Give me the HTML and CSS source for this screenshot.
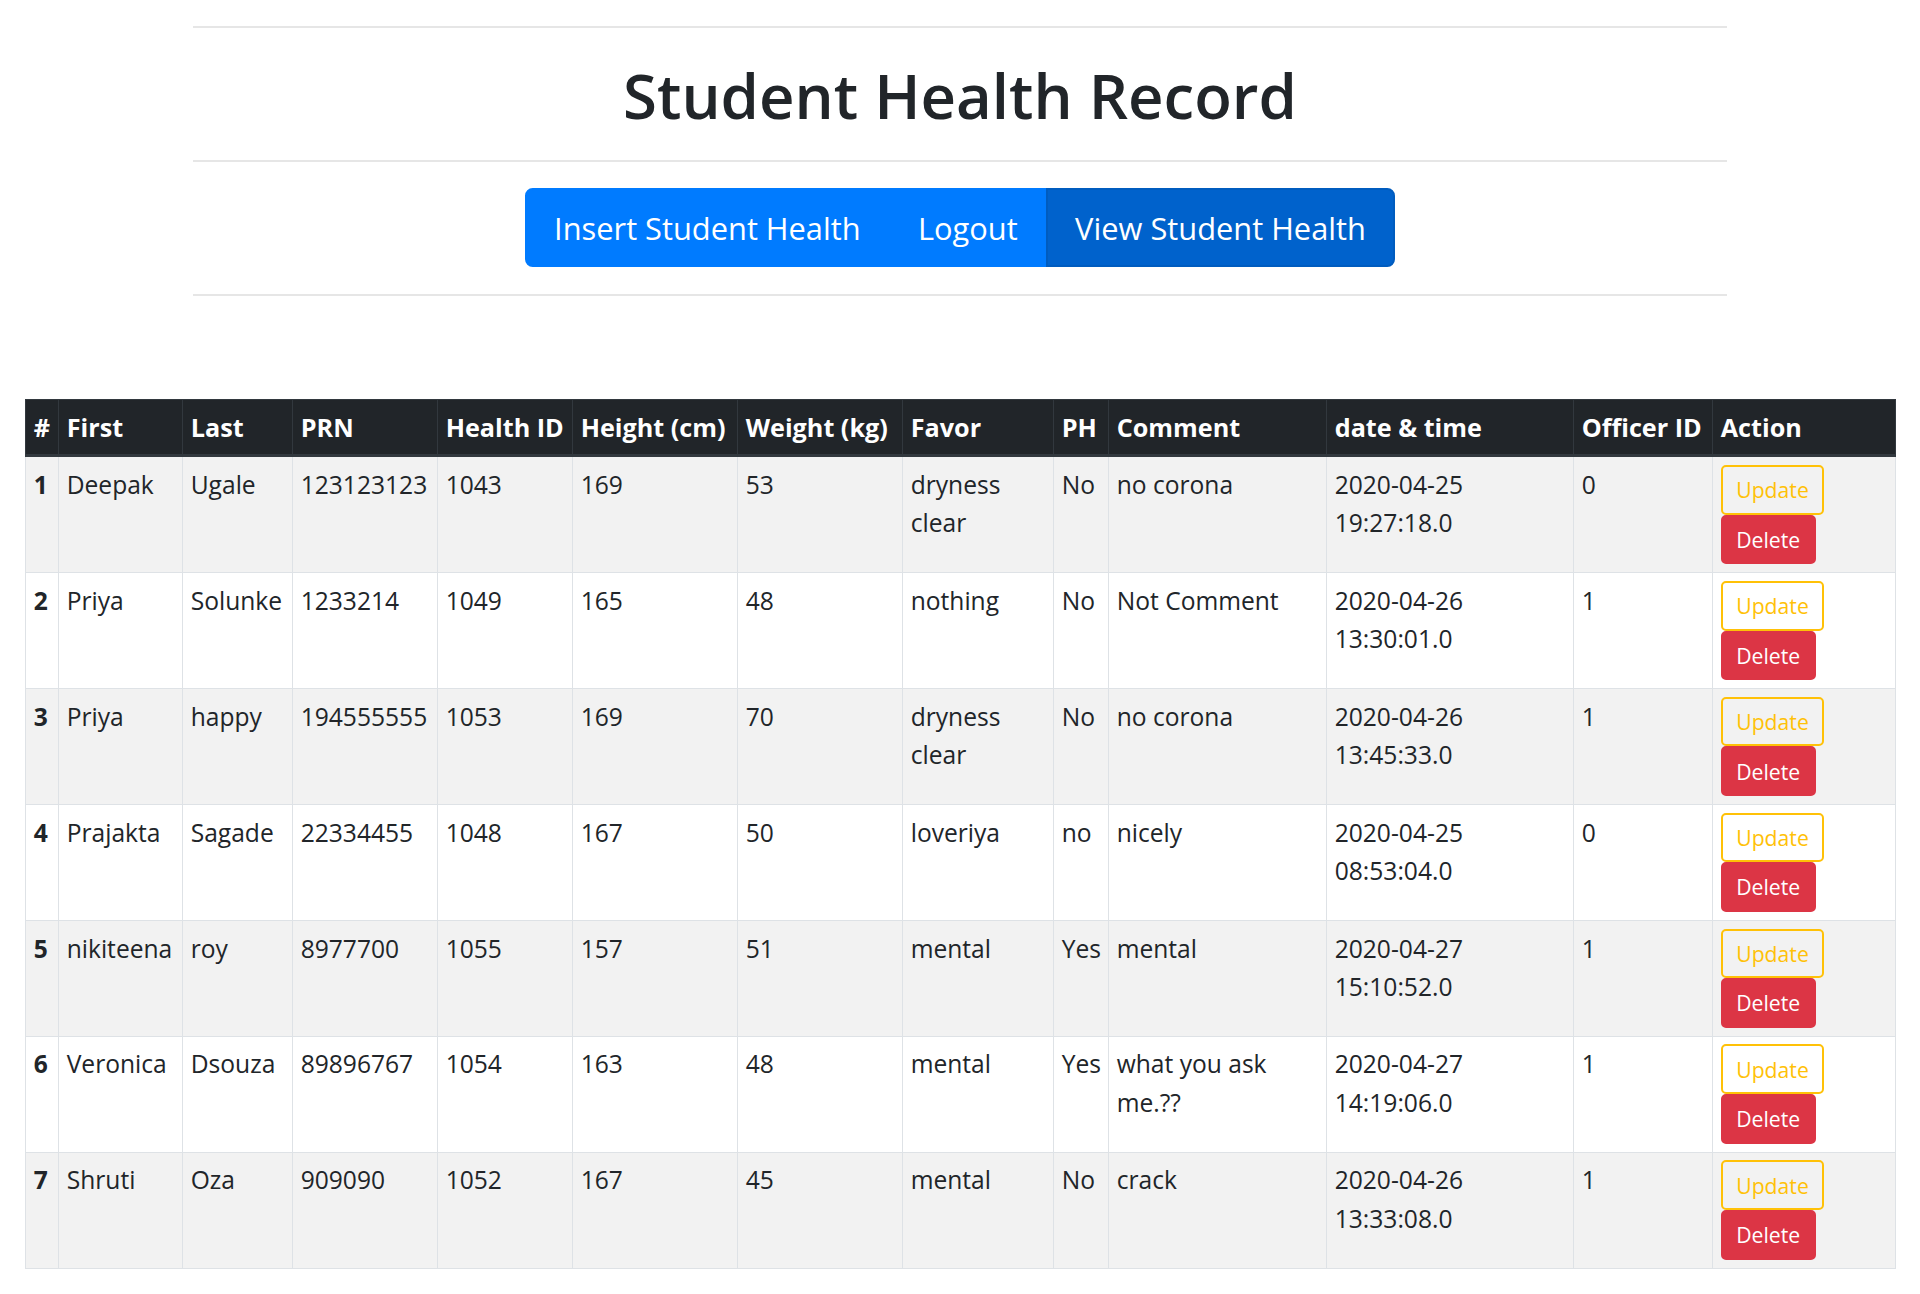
FILE: index.html
```html
<!DOCTYPE html>
<html lang="en">
<head>
<meta charset="utf-8">
<title>Student Health Record</title>
<link rel="stylesheet" href="styles.css">
</head>
<body>
<header class="masthead">
  <hr class="rule">
  <h1 class="title">Student Health Record</h1>
  <hr class="rule">
  <nav class="nav">
    <div class="btn-group">
      <a class="nav-btn" href="#">Insert Student Health</a>
      <a class="nav-btn" href="#">Logout</a>
      <a class="nav-btn active" href="#">View Student Health</a>
    </div>
  </nav>
  <hr class="rule">
</header>

<table class="records">
  <colgroup>
    <col class="c-num"><col class="c-first"><col class="c-last"><col class="c-prn"><col class="c-hid"><col class="c-height"><col class="c-weight"><col class="c-favor"><col class="c-ph"><col class="c-comment"><col class="c-date"><col class="c-officer"><col class="c-action">
  </colgroup>
  <thead>
    <tr>
      <th>#</th><th>First</th><th>Last</th><th>PRN</th><th>Health ID</th><th>Height (cm)</th><th>Weight (kg)</th><th>Favor</th><th>PH</th><th>Comment</th><th>date &amp; time</th><th>Officer ID</th><th>Action</th>
    </tr>
  </thead>
  <tbody>
    <tr>
      <th>1</th><td>Deepak</td><td>Ugale</td><td>123123123</td><td>1043</td><td>169</td><td>53</td><td>dryness clear</td><td>No</td><td>no corona</td><td>2020-04-25 19:27:18.0</td><td>0</td>
      <td class="action-cell"><div class="actions"><button class="btn btn-update">Update</button><button class="btn btn-delete">Delete</button></div></td>
    </tr>
    <tr>
      <th>2</th><td>Priya</td><td>Solunke</td><td>1233214</td><td>1049</td><td>165</td><td>48</td><td>nothing</td><td>No</td><td>Not Comment</td><td>2020-04-26 13:30:01.0</td><td>1</td>
      <td class="action-cell"><div class="actions"><button class="btn btn-update">Update</button><button class="btn btn-delete">Delete</button></div></td>
    </tr>
    <tr>
      <th>3</th><td>Priya</td><td>happy</td><td>194555555</td><td>1053</td><td>169</td><td>70</td><td>dryness clear</td><td>No</td><td>no corona</td><td>2020-04-26 13:45:33.0</td><td>1</td>
      <td class="action-cell"><div class="actions"><button class="btn btn-update">Update</button><button class="btn btn-delete">Delete</button></div></td>
    </tr>
    <tr>
      <th>4</th><td>Prajakta</td><td>Sagade</td><td>22334455</td><td>1048</td><td>167</td><td>50</td><td>loveriya</td><td>no</td><td>nicely</td><td>2020-04-25 08:53:04.0</td><td>0</td>
      <td class="action-cell"><div class="actions"><button class="btn btn-update">Update</button><button class="btn btn-delete">Delete</button></div></td>
    </tr>
    <tr>
      <th>5</th><td>nikiteena</td><td>roy</td><td>8977700</td><td>1055</td><td>157</td><td>51</td><td>mental</td><td>Yes</td><td>mental</td><td>2020-04-27 15:10:52.0</td><td>1</td>
      <td class="action-cell"><div class="actions"><button class="btn btn-update">Update</button><button class="btn btn-delete">Delete</button></div></td>
    </tr>
    <tr>
      <th>6</th><td>Veronica</td><td>Dsouza</td><td>89896767</td><td>1054</td><td>163</td><td>48</td><td>mental</td><td>Yes</td><td>what you ask me.??</td><td>2020-04-27 14:19:06.0</td><td>1</td>
      <td class="action-cell"><div class="actions"><button class="btn btn-update">Update</button><button class="btn btn-delete">Delete</button></div></td>
    </tr>
    <tr>
      <th>7</th><td>Shruti</td><td>Oza</td><td>909090</td><td>1052</td><td>167</td><td>45</td><td>mental</td><td>No</td><td>crack</td><td>2020-04-26 13:33:08.0</td><td>1</td>
      <td class="action-cell"><div class="actions"><button class="btn btn-update">Update</button><button class="btn btn-delete">Delete</button></div></td>
    </tr>
  </tbody>
</table>
</body>
</html>
```

FILE: styles.css
```css
* { box-sizing: border-box; }

body {
  margin: 0;
  background: #fff;
  color: #212529;
  font-family: "Open Sans", "Noto Sans", sans-serif;
  font-size: 24.6px;
  line-height: 38.4px;
}

.masthead {
  margin: 0 193px;
  padding-top: 26px;
}

.rule {
  margin: 0;
  height: 0;
  border: 0;
  border-top: 2px solid #e6e6e6;
}

.title {
  margin: 27px 0 25px;
  font-size: 61.7px;
  line-height: 80px;
  font-weight: 600;
  text-align: center;
}

.nav {
  display: flex;
  justify-content: center;
  margin: 26px 0 27px;
}

.btn-group {
  display: flex;
}

.nav-btn {
  display: block;
  padding: 14px 26.7px 12.7px;
  font-size: 30.8px;
  line-height: 48px;
  color: #fff;
  background: #007bff;
  border: 2px solid #007bff;
  text-decoration: none;
}

.nav-btn:first-child { border-radius: 7.7px 0 0 7.7px; }
.nav-btn:last-child { border-radius: 0 7.7px 7.7px 0; }

.nav-btn.active {
  background: #0062cc;
  border-color: #005cbf;
}

.records {
  width: 1870px;
  margin: 103px 25px 0;
  border-collapse: collapse;
  table-layout: fixed;
}

.c-num { width: 33px; }
.c-first { width: 124px; }
.c-last { width: 110px; }
.c-prn { width: 145px; }
.c-hid { width: 135px; }
.c-height { width: 165px; }
.c-weight { width: 165px; }
.c-favor { width: 151px; }
.c-ph { width: 55px; }
.c-comment { width: 218px; }
.c-date { width: 247px; }
.c-officer { width: 139px; }
.c-action { width: 183px; }

.records th,
.records td {
  padding: 8.7px 7.7px 6.7px;
  border: 1px solid #dee2e6;
  text-align: left;
  vertical-align: top;
}

.records th { font-weight: 700; }

.records thead th {
  padding: 8px 7.7px;
  font-size: 25.2px;
  color: #fff;
  background: #212529;
  border-color: #32383e;
  border-bottom: 3px solid #32383e;
  white-space: nowrap;
}

.records tbody tr:nth-child(odd) {
  background: #f2f2f2;
}

.records .action-cell {
  padding: 7.7px;
}

.actions {
  display: flex;
  flex-direction: column;
  align-items: flex-start;
}

.btn {
  display: block;
  margin: 0;
  padding: 6.1px 13.5px;
  font-family: inherit;
  font-size: 21.2px;
  line-height: 33.6px;
  border: 2px solid transparent;
  border-radius: 5px;
  cursor: pointer;
}

.btn-update {
  color: #ffc107;
  background: transparent;
  border-color: #ffc107;
}

.btn-delete {
  color: #fff;
  background: #dc3545;
  border-color: #dc3545;
}
```
